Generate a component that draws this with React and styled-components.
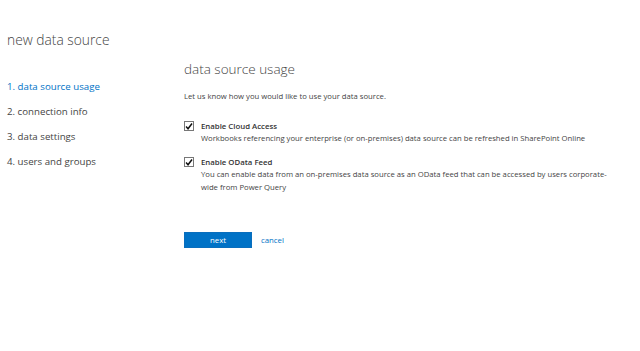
import React from "react";
import styled, { createGlobalStyle } from "styled-components";

const Global = createGlobalStyle`
  html, body { margin: 0; padding: 0; background: #fff; }
  body { font-family: "Open Sans", "Noto Sans", sans-serif; color: #444; }
`;

const Page = styled.div`
  padding: 30px 8px 0 7px;
`;

const Title = styled.h1`
  margin: 0;
  font-size: 13.8px;
  font-weight: 300;
  line-height: 20px;
  color: #444;
`;

const Columns = styled.div`
  display: grid;
  grid-template-columns: 177px 1fr;
`;

const Nav = styled.ul`
  list-style: none;
  margin: 0;
  padding: 24px 0 0 0;
`;

const NavItem = styled.li`
  font-size: 9.7px;
  line-height: 25px;
  color: ${(p) => (p.$active ? "#0072c6" : "#444")};
`;

const Main = styled.div`
  padding-top: 9px;
`;

const Heading = styled.h2`
  margin: 0;
  font-size: 13.5px;
  font-weight: 300;
  line-height: 20px;
  color: #444;
`;

const Intro = styled.p`
  margin: 11px 0 0 0;
  font-size: 7.7px;
  line-height: 12px;
  color: #444;
`;

const Option = styled.div`
  display: grid;
  grid-template-columns: 17px 1fr;
  margin-top: ${(p) => p.$gap}px;
`;

const Box = styled.span`
  box-sizing: border-box;
  width: 10px;
  height: 10px;
  margin-top: 1px;
  border: 1px solid #777;
  background: #fff;
  display: flex;
  align-items: center;
  justify-content: center;
`;

const Label = styled.div`
  font-size: 7.8px;
  font-weight: 600;
  line-height: 12px;
  color: #333;
`;

const Desc = styled.div`
  font-size: 7.7px;
  line-height: 13px;
  color: #444;
  max-width: 420px;
`;

const Actions = styled.div`
  display: flex;
  align-items: center;
  gap: 9px;
  margin-top: 38px;
`;

const Button = styled.button`
  width: 68px;
  height: 16px;
  padding: 0;
  border: 1px solid #0a6ebd;
  background: #0072c6;
  color: #fff;
  font-family: inherit;
  font-size: 7.8px;
  line-height: 14px;
`;

const Link = styled.a`
  color: #0072c6;
  font-size: 7.8px;
  text-decoration: none;
`;

const Check = () => (
  <svg width="9" height="9" viewBox="0 0 9 9">
    <path d="M1.2 4.6 L3.4 7 L7.9 1.2" fill="none" stroke="#111" strokeWidth="1.7" />
  </svg>
);

export default function App() {
  return (
    <Page>
      <Global />
      <Title>new data source</Title>
      <Columns>
        <Nav>
          <NavItem $active>1. data source usage</NavItem>
          <NavItem>2. connection info</NavItem>
          <NavItem>3. data settings</NavItem>
          <NavItem>4. users and groups</NavItem>
        </Nav>
        <Main>
          <Heading>data source usage</Heading>
          <Intro>Let us know how you would like to use your data source.</Intro>
          <Option $gap={18}>
            <Box><Check /></Box>
            <div>
              <Label>Enable Cloud Access</Label>
              <Desc>Workbooks referencing your enterprise (or on-premises) data source can be refreshed in SharePoint Online</Desc>
            </div>
          </Option>
          <Option $gap={11}>
            <Box><Check /></Box>
            <div>
              <Label>Enable OData Feed</Label>
              <Desc>You can enable data from an on-premises data source as an OData feed that can be accessed by users corporate-wide from Power Query</Desc>
            </div>
          </Option>
          <Actions>
            <Button>next</Button>
            <Link href="#">cancel</Link>
          </Actions>
        </Main>
      </Columns>
    </Page>
  );
}
